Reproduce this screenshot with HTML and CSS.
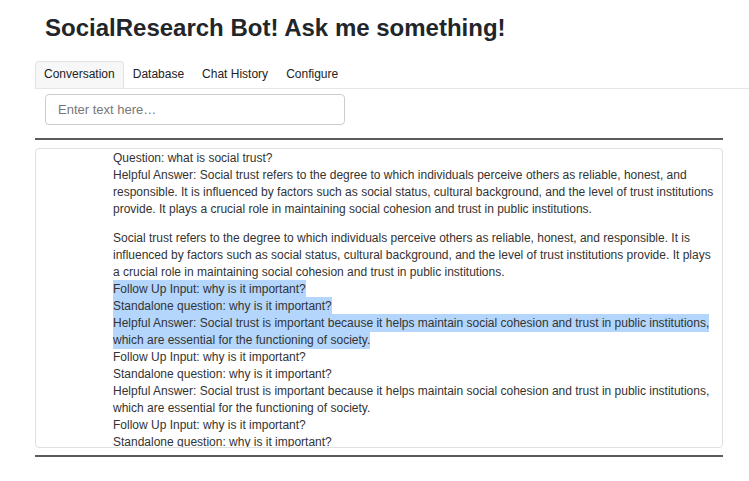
FILE: index.html
```html
<!DOCTYPE html>
<html lang="en">
<head>
<meta charset="utf-8">
<title>SocialResearch Bot</title>
<link rel="stylesheet" href="styles.css">
</head>
<body>
<main class="page">
  <h1 class="title">SocialResearch Bot! Ask me something!</h1>
  <nav class="tabs">
    <div class="tab active">Conversation</div>
    <div class="tab">Database</div>
    <div class="tab">Chat History</div>
    <div class="tab">Configure</div>
  </nav>
  <div class="input-row">
    <input class="text-input" type="text" placeholder="Enter text here…">
  </div>
  <hr class="rule">
  <section class="chat">
    <div class="chat-body">
      <p class="msg">Question: what is social trust?<br>Helpful Answer: Social trust refers to the degree to which individuals perceive others as reliable, honest, and responsible. It is influenced by factors such as social status, cultural background, and the level of trust institutions provide. It plays a crucial role in maintaining social cohesion and trust in public institutions.</p>
      <p class="msg">Social trust refers to the degree to which individuals perceive others as reliable, honest, and responsible. It is influenced by factors such as social status, cultural background, and the level of trust institutions provide. It plays a crucial role in maintaining social cohesion and trust in public institutions.<br><span class="hl">Follow Up Input: why is it important?</span><br><span class="hl">Standalone question: why is it important?</span><br><span class="hl">Helpful Answer: Social trust is important because it helps maintain social cohesion and trust in public institutions, which are essential for the functioning of society.</span><br>Follow Up Input: why is it important?<br>Standalone question: why is it important?<br>Helpful Answer: Social trust is important because it helps maintain social cohesion and trust in public institutions, which are essential for the functioning of society.<br>Follow Up Input: why is it important?<br>Standalone question: why is it important?<br>Helpful Answer: Social trust is important because it helps maintain social cohesion and trust in public institutions, which are essential for the functioning of society.</p>
    </div>
  </section>
  <hr class="rule rule-bottom">
</main>
</body>
</html>
```
FILE: styles.css
```css
html, body {
  margin: 0;
  padding: 0;
  background: #ffffff;
}

body {
  font-family: "Liberation Sans", Arial, Helvetica, sans-serif;
  color: #333333;
  font-size: 12px;
}

.page {
  padding: 14px 0 0 35px;
}

.title {
  margin: 0 0 20px 10px;
  font-size: 24px;
  line-height: 27px;
  font-weight: bold;
  color: #222529;
}

.tabs {
  display: flex;
  border-bottom: 1px solid #e6e6e6;
}

.tab {
  padding: 4px 8px 5px;
  line-height: 17px;
  font-size: 12px;
  color: #222222;
  border: 1px solid transparent;
  border-bottom: none;
  border-radius: 4px 4px 0 0;
}

.tab.active {
  background: #f7f7f7;
  border-color: #e2e2e2;
}

.input-row {
  padding: 5px 0 0 10px;
}

.text-input {
  box-sizing: border-box;
  width: 300px;
  height: 31px;
  margin: 0;
  padding: 0 12px;
  border: 1px solid #cccccc;
  border-radius: 4px;
  font-family: "Liberation Sans", Arial, sans-serif;
  font-size: 13px;
  color: #333333;
  background: #ffffff;
  display: block;
}

.text-input::placeholder {
  color: #777777;
}

.rule {
  margin: 13px 26px 0 0;
  height: 2px;
  border: none;
  background: #5b5b5b;
}

.rule-bottom {
  margin-top: 7px;
}

.chat {
  box-sizing: border-box;
  margin: 8px 26px 0 0;
  height: 300px;
  border: 1px solid #e0e0e0;
  border-radius: 4px;
  overflow: hidden;
}

.chat-body {
  margin-top: 1px;
  padding: 0 8px 0 77px;
}

.msg {
  margin: 0 0 12px;
  line-height: 17px;
  font-size: 12px;
  color: #333333;
}

.hl {
  background: #b4d6fc;
  padding: 2px 0;
}
```
